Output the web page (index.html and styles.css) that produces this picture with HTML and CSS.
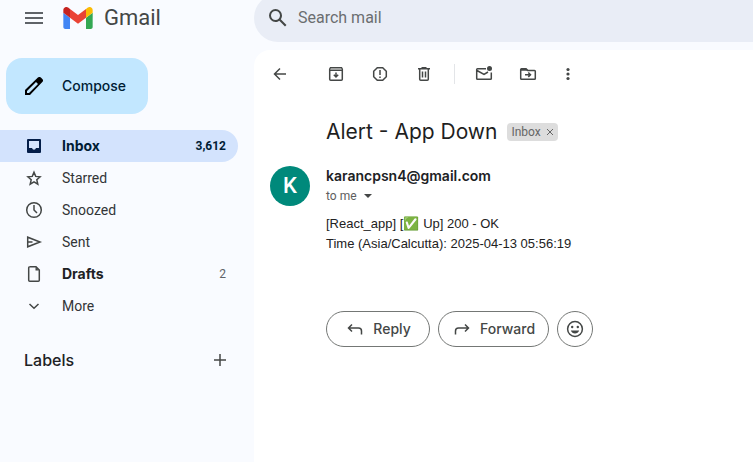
FILE: index.html
```html
<!DOCTYPE html>
<html lang="en">
<head>
<meta charset="utf-8">
<meta name="viewport" content="width=device-width, initial-scale=1">
<title>Alert - App Down - Gmail</title>
<link rel="stylesheet" href="styles.css">
</head>
<body>
<div class="app">
  <header class="topbar">
    <div class="brand">
      <button class="icon-button" aria-label="Main menu"><svg class="icon-menu" viewBox="0 0 18 12"><path d="M0 0h18v2H0zM0 5h18v2H0zM0 10h18v2H0z"/></svg></button>
      <a class="logo" href="#">
        <svg viewBox="52 42 88 66" aria-hidden="true"><path fill="#4285f4" d="M58 108h14V74L52 59v43c0 3.32 2.69 6 6 6"/><path fill="#34a853" d="M120 108h14c3.32 0 6-2.69 6-6V59l-20 15"/><path fill="#fbbc04" d="M120 48v26l20-15v-8c0-7.42-8.47-11.65-14.4-7.2"/><path fill="#ea4335" d="M72 74V48l24 18 24-18v26L96 92"/><path fill="#c5221f" d="M52 51v8l20 15V48l-5.6-4.2c-5.94-4.45-14.4-.22-14.4 7.2"/></svg>
        <span>Gmail</span>
      </a>
    </div>
    <form class="search" role="search">
      <svg viewBox="0 0 24 24" aria-hidden="true"><path d="M20.49 19l-5.73-5.73C15.53 12.2 16 10.91 16 9.5A6.5 6.5 0 1 0 9.5 16c1.41 0 2.7-.47 3.77-1.24L19 20.49 20.49 19zM5 9.5C5 7.01 7.01 5 9.5 5S14 7.01 14 9.5 11.99 14 9.5 14 5 11.99 5 9.5z"/></svg>
      <input type="search" placeholder="Search mail" aria-label="Search mail">
    </form>
  </header>

  <aside class="sidebar">
    <button class="compose">
      <svg viewBox="0 0 18 18" aria-hidden="true"><path fill-rule="evenodd" d="M0 18v-5L12.900 .6q1.500-1.300 3 0l1.400 1.400q1.500 1.600 0 3.100L5 18zm2-2h2l9-9-2-2-9 9z"/></svg>
      Compose
    </button>
    <nav aria-label="Folders">
      <a class="folder folder-active" href="#"><svg viewBox="0 0 20 20"><path fill-rule="evenodd" d="M4 3h12q1 0 1 1v12q0 1-1 1H4q-1 0-1-1V4q0-1 1-1zm1 2v7h3q.5 1.700 2 1.700T12 12h3V5z"/></svg><span>Inbox</span><span class="count">3,612</span></a>
      <a class="folder" href="#"><svg class="line" viewBox="0 0 20 20"><path d="m10 4.200 1.700 4.200 4.400.4-3.300 3 1 4.400-3.800-2.400-3.800 2.400 1-4.400-3.300-3 4.400-.4z"/></svg><span>Starred</span></a>
      <a class="folder" href="#"><svg class="line" viewBox="0 0 20 20"><circle cx="10" cy="10" r="7.300"/><path d="M10 5v5l3 3"/></svg><span>Snoozed</span></a>
      <a class="folder" href="#"><svg class="line" viewBox="0 0 20 20"><path d="M3.700 5.200v9.600L16 10zM3.700 10H8.500"/></svg><span>Sent</span></a>
      <a class="folder folder-unread" href="#"><svg class="line" viewBox="0 0 20 20"><path d="M5.500 2.700H12L15.300 6v10.300q0 1-1 1H5.700q-1 0-1-1V3.700q0-1 1-1z"/><path class="solid" d="M11.500 3v3.500H15z"/></svg><span>Drafts</span><span class="count">2</span></a>
      <a class="folder" href="#"><svg class="line" viewBox="0 0 20 20"><path d="m5.500 8 4.500 4.300L14.500 8"/></svg><span>More</span></a>
    </nav>
    <div class="labels">
      <h2>Labels</h2>
      <button class="icon-button" aria-label="Create new label"><svg class="line" viewBox="0 0 20 20"><path d="M10 4v12M4 10h12"/></svg></button>
    </div>
  </aside>

  <main class="panel">
    <div class="toolbar">
      <button class="icon-button back" aria-label="Back to inbox"><svg class="line" viewBox="0 0 20 20"><path d="M16 10H5M10 4.500 4.500 10l5.500 5.500"/></svg></button>
      <div class="tools">
        <button class="icon-button" aria-label="Archive"><svg class="line" viewBox="0 0 20 20"><path d="M4.500 3.700h11l.8 1.600v10q0 1-1 1H4.700q-1 0-1-1v-10zM3.700 6.300h12.600M10 8.500v4M7.800 10.800l2.200 2.200 2.200-2.200"/><path class="shade" d="M4.500 4.500h11V6h-11z"/></svg></button>
        <button class="icon-button" aria-label="Report spam"><svg class="line" viewBox="0 0 20 20"><path d="M7.300 3.700h5.400l3.600 3.600v5.400l-3.600 3.600H7.300l-3.600-3.600V7.300zM10 6v5M10 12.500V14"/></svg></button>
        <button class="icon-button" aria-label="Delete"><svg class="line" viewBox="0 0 20 20"><path d="M4 4.700h12M7.500 3.800h5M5.700 5v10.300q0 1 1 1h6.600q1 0 1-1V5M8.500 7.500v6M11.500 7.500v6"/></svg></button>
      </div>
      <div class="tools tools-more">
        <button class="icon-button" aria-label="Mark as unread"><svg class="line" viewBox="0 0 20 20"><path d="M12 4.700H3.500q-.8 0-.8.8v9q0 .8.8.8h13q.8 0 .8-.8V8.500M3 6.500l7 4 4-2.500"/><circle class="solid" cx="15.500" cy="4.500" r="2.500"/></svg></button>
        <button class="icon-button" aria-label="Move to"><svg class="line" viewBox="0 0 20 20"><path d="M3.500 4.700H8L9.700 6.400h6.800q.8 0 .8.8v7.300q0 .8-.8.8h-13q-.8 0-.8-.8v-9q0-.8.8-.8zM7 10.700h5M10.300 8.500l2.200 2.200-2.200 2.200"/><path class="solid" d="M3 4.500h5l2 2.300H3z"/></svg></button>
      </div>
      <button class="icon-button" aria-label="More options"><svg viewBox="0 0 20 20"><circle cx="10" cy="5.500" r="1.600"/><circle cx="10" cy="10" r="1.600"/><circle cx="10" cy="14.500" r="1.600"/></svg></button>
    </div>

    <article class="message">
      <div class="subject">
        <h1>Alert - App Down</h1>
        <span class="chip">Inbox <button aria-label="Remove label Inbox"><svg viewBox="0 0 8 8"><path d="m1 1 6 6M7 1 1 7"/></svg></button></span>
      </div>
      <div class="avatar" aria-hidden="true">K</div>
      <div class="sender">
        <h3>karancpsn4@gmail.com</h3>
        <button class="recipient">to me <svg viewBox="0 0 8 4" aria-hidden="true"><path d="M0 0h8L4 4z"/></svg></button>
      </div>
      <div class="text">
        <p>[React_app] [✅ Up] 200 - OK</p>
        <p>Time (Asia/Calcutta): 2025-04-13 05:56:19</p>
      </div>
      <div class="actions">
        <button class="pill"><svg class="line" viewBox="0 0 20 20" aria-hidden="true"><path d="M7 5.500 3.500 9 7 12.500M3.500 9h10q3 0 3 3v3.500"/></svg>Reply</button>
        <button class="pill"><svg class="line" viewBox="0 0 20 20" aria-hidden="true"><path d="M13 5.500 16.500 9 13 12.500M16.500 9h-10q-3 0-3 3v3.500"/></svg>Forward</button>
        <button class="pill pill-round" aria-label="Add reaction"><svg class="line" viewBox="0 0 20 20"><circle cx="10" cy="10" r="7.400"/><path class="solid" d="M5.800 11.500h8.400q-1.200 3-4.200 3t-4.200-3z"/><circle class="solid" cx="7.200" cy="8" r="1.200"/><circle class="solid" cx="12.800" cy="8" r="1.200"/></svg></button>
      </div>
    </article>
  </main>
</div>
</body>
</html>
```
FILE: styles.css
```css
* {
  box-sizing: border-box;
}

body {
  margin: 0;
  background: #f9fbff;
  color: #202124;
  font-family: Roboto, "Liberation Sans", sans-serif;
  font-size: 14px;
  line-height: 20px;
}

h1, h2, h3, p {
  margin: 0;
  font-weight: 400;
}

button {
  padding: 0;
  border: 0;
  background: none;
  color: inherit;
  font: inherit;
  cursor: pointer;
}

a {
  color: inherit;
  text-decoration: none;
}

svg {
  display: block;
  flex: none;
  fill: #444746;
}

.line {
  fill: none;
  stroke: #444746;
  stroke-width: 1.5px;
}

.solid {
  fill: #444746;
  stroke: none;
}

.shade {
  fill: #a0a2a1;
  stroke: none;
}

.app {
  display: grid;
  grid-template-columns: 254px 1fr;
  grid-template-rows: auto 1fr;
  row-gap: 8px;
  min-height: 100vh;
}

.icon-button {
  display: grid;
  place-items: center;
  width: 20px;
  height: 20px;
}

.icon-button svg {
  width: 20px;
  height: 20px;
}

.topbar {
  display: grid;
  grid-template-columns: subgrid;
  grid-column: 1 / -1;
}

.brand {
  display: flex;
  align-items: center;
  gap: 19px;
  height: 36px;
  padding-left: 24px;
}

.icon-button .icon-menu {
  width: 18px;
  height: 12px;
  fill: #5f6368;
}

.logo {
  display: flex;
  align-items: center;
  gap: 11px;
  color: #444746;
  font-size: 22px;
}

.logo svg {
  width: 30px;
  height: 22px;
}

.search {
  display: flex;
  align-items: center;
  gap: 8px;
  height: 48px;
  margin-top: -6px;
  padding-left: 12px;
  border-radius: 24px 0 0 24px;
  background: #e9edf6;
}

.search svg {
  width: 24px;
  height: 24px;
}

.search input {
  flex: 1;
  min-width: 0;
  padding: 0;
  border: 0;
  outline: 0;
  background: none;
  font: 16px/24px Roboto, sans-serif;
}

.search input::placeholder {
  color: #6b6e70;
}

.sidebar {
  padding: 8px 16px 16px 0;
}

.compose,
.folder-active,
.folder-unread,
.labels h2,
.subject h1,
.sender h3,
.pill {
  font-family: Inter, Roboto, sans-serif;
}

.compose {
  display: flex;
  align-items: center;
  gap: 19px;
  height: 56px;
  margin: 0 0 16px 6px;
  padding: 0 22px 0 19px;
  border-radius: 16px;
  background: #c2e7ff;
  color: #001d35;
  font-weight: 500;
}

.compose svg {
  width: 18px;
  height: 18px;
  fill: #000;
}

.folder {
  display: flex;
  align-items: center;
  gap: 18px;
  height: 32px;
  padding: 0 12px 0 24px;
  border-radius: 0 16px 16px 0;
  color: #333537;
}

.folder svg {
  width: 20px;
  height: 20px;
}

.folder-active {
  background: #d3e3fd;
  color: #001d35;
  font-weight: 700;
}

.folder-active svg {
  fill: #041e49;
}

.folder-unread {
  color: #202124;
  font-weight: 700;
}

.count {
  margin-left: auto;
  font-family: Roboto, sans-serif;
  font-size: 12px;
}

.folder-unread .count {
  color: #5f6368;
  font-weight: 400;
}

.labels {
  display: flex;
  align-items: center;
  justify-content: space-between;
  padding: 28px 8px 0 24px;
}

.labels h2 {
  font-size: 16px;
  font-weight: 500;
}

.panel {
  padding: 14px 16px;
  border-radius: 16px 0 0 0;
  background: #fff;
}

.toolbar {
  display: flex;
  align-items: center;
  gap: 20px;
}

.back {
  margin-right: 16px;
}

.tools {
  display: flex;
  gap: 24px;
}

.tools-more {
  padding-left: 19px;
  border-left: 1px solid #e3e5e8;
}

.message {
  display: grid;
  grid-template-columns: 40px 1fr;
  column-gap: 16px;
  margin-top: 32px;
}

.subject,
.text,
.actions {
  grid-column: 2;
}

.subject {
  display: flex;
  align-items: center;
  gap: 10px;
}

.subject h1 {
  color: #1f1f1f;
  font-size: 21px;
  line-height: 32px;
}

.chip {
  display: flex;
  align-items: center;
  gap: 5px;
  height: 18px;
  padding: 0 4px;
  border-radius: 4px;
  background: #ddd;
  color: #666;
  font-size: 12px;
}

.chip svg {
  width: 8px;
  height: 8px;
  fill: none;
  stroke: #666;
}

.avatar {
  display: grid;
  place-items: center;
  width: 40px;
  height: 40px;
  margin-top: 18px;
  border-radius: 50%;
  background: #00897b;
  color: #fff;
  font-size: 22px;
  font-weight: 500;
}

.sender {
  margin-top: 18px;
}

.sender h3 {
  font-size: 14px;
  font-weight: 600;
}

.recipient {
  display: flex;
  align-items: center;
  gap: 7px;
  color: #5e5e5e;
  font-size: 12px;
  line-height: 20px;
}

.recipient svg {
  width: 8px;
  height: 4px;
}

.text {
  margin-top: 8px;
  color: #222;
  font: 13px/20px "Liberation Sans", "Noto Color Emoji", sans-serif;
}

.actions {
  display: flex;
  gap: 8px;
  margin-top: 57px;
}

.pill {
  display: flex;
  align-items: center;
  justify-content: center;
  gap: 8px;
  min-width: 104px;
  height: 36px;
  padding: 0 13px;
  border: 1px solid #747775;
  border-radius: 18px;
  color: #444746;
  font-weight: 500;
}

.pill svg {
  width: 20px;
  height: 20px;
}

.pill-round {
  min-width: 36px;
  padding: 0;
}
```
